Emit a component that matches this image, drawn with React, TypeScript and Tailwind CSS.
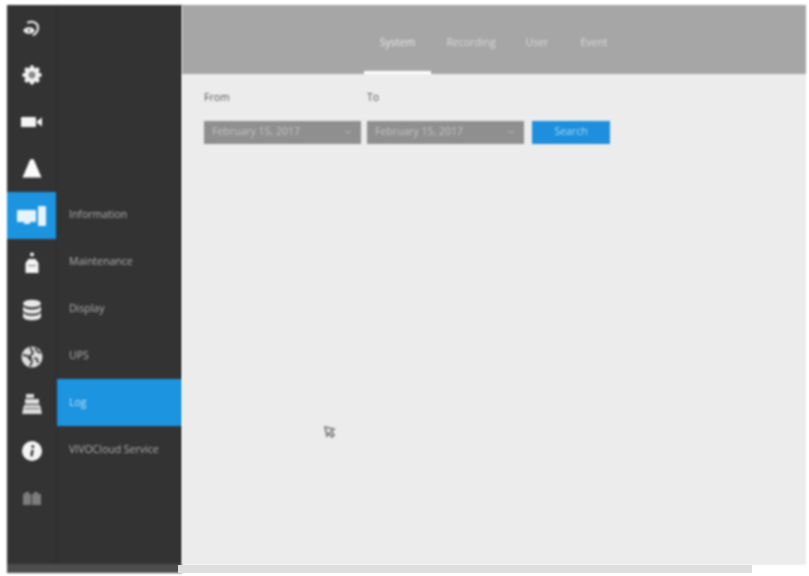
import { ChevronDown } from 'lucide-react';

function LogoIcon() {
  return (
    <svg viewBox="0 0 24 24" className="w-6 h-6" fill="none">
      <ellipse cx="9" cy="14.5" rx="5.5" ry="3.2" fill="#f2f2f2" />
      <circle cx="9" cy="14.5" r="1.2" fill="#555" />
      <path d="M8 6.5c5-2 10 .5 10 5 0 3.5-2 6-4.5 7.500" stroke="#f2f2f2" strokeWidth="2" strokeLinecap="round" />
    </svg>
  );
}

function GearIcon() {
  return (
    <svg viewBox="0 0 24 24" className="w-6 h-6">
      <g fill="#f2f2f2">
        <circle cx="12" cy="12" r="7.5" />
        <rect x="10" y="2.5" width="4" height="19" rx="1" />
        <rect x="10" y="2.5" width="4" height="19" rx="1" transform="rotate(45 12 12)" />
        <rect x="10" y="2.5" width="4" height="19" rx="1" transform="rotate(90 12 12)" />
        <rect x="10" y="2.5" width="4" height="19" rx="1" transform="rotate(135 12 12)" />
      </g>
      <circle cx="12" cy="12" r="3.4" fill="#8a8a8a" />
    </svg>
  );
}

function CameraIcon() {
  return (
    <svg viewBox="0 0 24 24" className="w-6 h-6" fill="#f5f5f5">
      <rect x="1" y="7" width="15" height="10" rx="1" />
      <path d="M17 11l5-3.500v9l-5-3.500z" />
    </svg>
  );
}

function BellIcon() {
  return (
    <svg viewBox="0 0 24 24" className="w-6 h-6" fill="#fafafa">
      <path d="M12 2c1.500 0 2 1 2.800 2.800L21.500 20.500H2.500L9.200 4.800C10 3 10.500 2 12 2z" />
    </svg>
  );
}

function DeviceIcon() {
  return (
    <svg viewBox="0 0 30 24" className="w-[30px] h-6" fill="#e4f3fc">
      <rect x="0" y="6" width="19" height="12" rx="1" />
      <rect x="7" y="18" width="6" height="2" />
      <rect x="21" y="2" width="8" height="20" rx="1" />
    </svg>
  );
}

function PersonIcon() {
  return (
    <svg viewBox="0 0 24 24" className="w-6 h-6" fill="#f5f5f5">
      <circle cx="12" cy="3.5" r="2" />
      <path d="M8.500 8h7l3 4v10H5.500V12z" />
      <rect x="8" y="14" width="8" height="1.2" fill="#888" />
    </svg>
  );
}

function DatabaseIcon() {
  return (
    <svg viewBox="0 0 24 24" className="w-6 h-6" fill="#e8e8e8">
      <ellipse cx="12" cy="5.500" rx="9" ry="3.800" />
      <path d="M3 8.200c1.500 2.200 5 3.200 9 3.200s7.500-1 9-3.200V12c0 2.200-4 3.800-9 3.800S3 14.200 3 12z" />
      <path d="M3 14.500c1.500 2.200 5 3.200 9 3.200s7.500-1 9-3.200V18.500c0 2.200-4 3.800-9 3.800s-9-1.600-9-3.800z" />
    </svg>
  );
}

function GlobeIcon() {
  return (
    <svg viewBox="0 0 24 24" className="w-6 h-6">
      <circle cx="12" cy="12" r="10.500" fill="#dedede" />
      <path d="M10 2.500l3 5-3 4 2 5-2 5M3 10l5 1 2 4M15 3l3 4 3 1M14 13l3 1 1 4" stroke="#333" strokeWidth="1.800" fill="none" />
    </svg>
  );
}

function StorageIcon() {
  return (
    <svg viewBox="0 0 24 24" className="w-6 h-6" fill="#dcdcdc">
      <rect x="6" y="2" width="8" height="4" />
      <rect x="5" y="7" width="14" height="5" />
      <path d="M4 13h16l2 9H2z" />
      <rect x="5" y="16" width="14" height="1" fill="#666" />
    </svg>
  );
}

function InfoIcon() {
  return (
    <svg viewBox="0 0 24 24" className="w-6 h-6">
      <circle cx="12" cy="12" r="10" fill="#f5f5f5" />
      <rect x="10.800" y="10.500" width="2.400" height="7" rx="1" fill="#333" transform="rotate(10 12 14)" />
      <circle cx="12.800" cy="7.500" r="1.500" fill="#333" />
    </svg>
  );
}

function BoxIcon() {
  return (
    <svg viewBox="0 0 24 24" className="w-6 h-6" fill="#7c7c7c">
      <rect x="3" y="8" width="8" height="11" />
      <rect x="12" y="8" width="9" height="11" />
      <rect x="5" y="6" width="4" height="2" />
      <rect x="14" y="6" width="4" height="2" />
    </svg>
  );
}

const railIcons = [
  <GearIcon />,
  <CameraIcon />,
  <BellIcon />,
  <DeviceIcon />,
  <PersonIcon />,
  <DatabaseIcon />,
  <GlobeIcon />,
  <StorageIcon />,
  <InfoIcon />,
  <BoxIcon />,
];

const menu = ['Information', 'Maintenance', 'Display', 'UPS', 'Log', 'VIVOCloud Service'];

function DateSelect() {
  return (
    <div className="w-[157px] h-[23px] bg-[#8f8f8f] flex items-center justify-between pl-[8px] pr-[8px] text-[10.5px] text-[#c4c4c4]">
      <span>February 15, 2017</span>
      <ChevronDown className="w-[10px] h-[10px]" />
    </div>
  );
}

export default function App() {
  return (
    <div className="w-[809px] h-[576px] overflow-hidden bg-white pt-[5px] pl-[7px] pr-[3px] flex font-['Open_Sans',sans-serif]">
      <aside className="w-[175px] h-[568px] bg-[#333333] flex flex-col blur-[0.8px]">
        <div className="flex flex-1">
          <nav className="w-[49px] flex flex-col">
            <div className="h-[46px] flex items-center justify-center">
              <LogoIcon />
            </div>
            {railIcons.map((icon, i) => (
              <div
                key={i}
                className={i === 3 ? 'h-[47px] flex items-center justify-center bg-[#1d94e0]' : 'h-[47px] flex items-center justify-center'}
              >
                {icon}
              </div>
            ))}
          </nav>
          <ul className="flex-1 pt-[186px] border-l border-[#2d2d2d]">
            {menu.map((item) => (
              <li
                key={item}
                className={
                  item === 'Log'
                    ? 'h-[47px] pl-[12px] flex items-center text-[10.5px] text-[#bfe3f8] bg-[#1d94e0]'
                    : 'h-[47px] pl-[12px] flex items-center text-[10.5px] text-[#b0b0b0]'
                }
              >
                {item}
              </li>
            ))}
          </ul>
        </div>
        <div className="h-[9px] bg-[#4d4d4d]" />
      </aside>

      <div className="flex-1 flex flex-col">
        <main className="h-[560px] bg-[#ececec] flex flex-col blur-[0.8px]">
          <header className="h-[69px] bg-[#a6a6a6] flex items-end pl-[182px] text-[10.5px] text-[#d8d8d8]">
            <div className="w-[67px] h-[65px] pt-[26px] text-center border-b-[3px] border-white text-[#e8e8e8]">System</div>
            <div className="w-[80px] h-[65px] pt-[26px] text-center">Recording</div>
            <div className="w-[52px] h-[65px] pt-[26px] text-center">User</div>
            <div className="w-[62px] h-[65px] pt-[26px] text-center">Event</div>
          </header>
          <section className="pl-[22px] pt-[16px]">
            <div className="flex gap-[6px] text-[10.5px] text-[#555555]">
              <div className="w-[157px]">From</div>
              <div className="w-[157px]">To</div>
            </div>
            <div className="flex gap-[6px] mt-[15px]">
              <DateSelect />
              <DateSelect />
              <button className="ml-[2px] w-[78px] h-[23px] bg-[#1d8fdc] text-[10.5px] text-[#a9dcf8]">Search</button>
            </div>
          </section>
          <div className="flex-1 pl-[141px] pt-[281px]">
            <svg viewBox="0 0 14 14" className="w-[14px] h-[14px]" fill="none" stroke="#777777" strokeWidth="1.600">
              <path d="M2 2l9 2-3 2 3 4-2 2-3-4-2 3z" />
            </svg>
          </div>
        </main>
        <div className="h-[8px] w-[574px] -ml-[4px] bg-[#dedede] blur-[0.6px]" />
      </div>
    </div>
  );
}
